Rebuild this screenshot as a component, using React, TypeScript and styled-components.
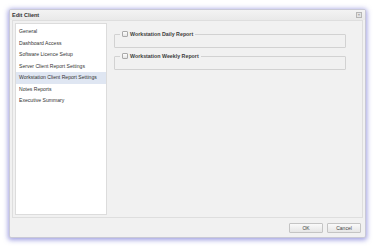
import React from "react";
import styled, { createGlobalStyle } from "styled-components";

const Global = createGlobalStyle`
  html, body { margin: 0; padding: 0; background: #ffffff; }
  body { font-family: "Liberation Sans", Arial, sans-serif; }
`;

const Page = styled.div`
  padding: 9px 0 0 9px;
  width: 375px;
  height: 246px;
  box-sizing: border-box;
`;

const Dialog = styled.div`
  width: 357px;
  height: 229px;
  box-sizing: border-box;
  background: #f1f1f1;
  border: 1px solid #c9c9d6;
  border-radius: 2px;
  box-shadow: 0 1px 5px 1px rgba(80, 80, 200, 0.55);
  display: flex;
  flex-direction: column;
`;

const TitleBar = styled.div`
  height: 10px;
  display: flex;
  align-items: center;
  justify-content: space-between;
  padding: 0 3px 0 2px;
  background: linear-gradient(#f3f3f3, #e9e9e9);
`;

const Title = styled.span`
  font-size: 5.5px;
  font-weight: bold;
  color: #333;
`;

const Close = styled.span`
  width: 4px;
  height: 4px;
  border: 1px solid #b5b5b5;
  background: #e4e4e4;
  color: #666;
  font-size: 4px;
  line-height: 4px;
  text-align: center;
`;

const Body = styled.div`
  flex: 1;
  margin: 0 2px;
  border: 1px solid #dedede;
  display: flex;
  padding: 2px;
  gap: 7px;
  min-height: 0;
`;

const Nav = styled.ul`
  list-style: none;
  margin: 0;
  padding: 2px 0 0;
  width: 92px;
  box-sizing: border-box;
  background: #ffffff;
  border: 1px solid #dcdcdc;
`;

const NavItem = styled.li<{ $active?: boolean }>`
  height: 11.5px;
  line-height: 11.5px;
  padding-left: 3px;
  font-size: 5.1px;
  color: #333;
  background: ${(p) => (p.$active ? "#dfe6f2" : "transparent")};
`;

const Content = styled.div`
  flex: 1;
  padding: 7px 14px 0 0;
  display: flex;
  flex-direction: column;
  gap: 4px;
`;

const Group = styled.fieldset`
  margin: 0;
  padding: 0;
  height: 18px;
  box-sizing: border-box;
  border: 1px solid #d2d2d2;
  border-radius: 1px;
`;

const Legend = styled.legend`
  margin-left: 5px;
  padding: 0 2px;
  height: 8px;
  display: flex;
  align-items: center;
  gap: 2px;
  font-size: 5.3px;
  font-weight: bold;
  color: #3c3c3c;
  line-height: 8px;
`;

const Check = styled.span`
  width: 4px;
  height: 4px;
  border: 1px solid #aaa;
  background: linear-gradient(#fdfdfd, #e4e4e4);
  border-radius: 1px;
`;

const Footer = styled.div`
  height: 19px;
  display: flex;
  align-items: center;
  justify-content: flex-end;
  gap: 4px;
  padding: 0 4px 0 0;
`;

const Button = styled.button`
  width: 34px;
  height: 10px;
  padding: 0;
  font-family: "Liberation Sans", Arial, sans-serif;
  font-size: 5px;
  color: #444;
  background: linear-gradient(#fafafa, #e6e6e6);
  border: 1px solid #c4c4c4;
  border-radius: 1px;
`;

const items = [
  "General",
  "Dashboard Access",
  "Software Licence Setup",
  "Server Client Report Settings",
  "Workstation Client Report Settings",
  "Notes Reports",
  "Executive Summary",
];

export default function App() {
  return (
    <Page>
      <Global />
      <Dialog>
        <TitleBar>
          <Title>Edit Client</Title>
          <Close>×</Close>
        </TitleBar>
        <Body>
          <Nav>
            {items.map((t, i) => (
              <NavItem key={t} $active={i === 4}>
                {t}
              </NavItem>
            ))}
          </Nav>
          <Content>
            <Group>
              <Legend>
                <Check />
                Workstation Daily Report
              </Legend>
            </Group>
            <Group>
              <Legend>
                <Check />
                Workstation Weekly Report
              </Legend>
            </Group>
          </Content>
        </Body>
        <Footer>
          <Button>OK</Button>
          <Button>Cancel</Button>
        </Footer>
      </Dialog>
    </Page>
  );
}
